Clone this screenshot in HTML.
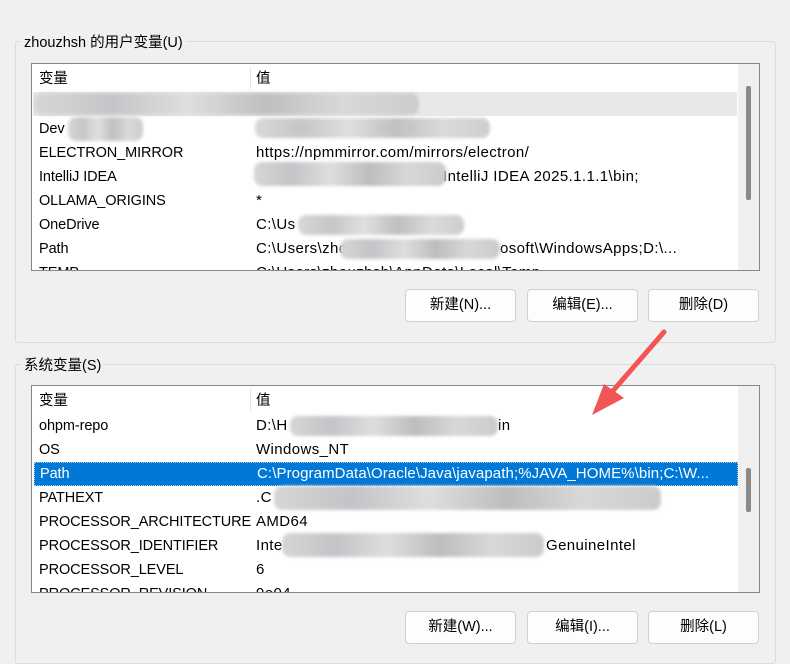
<!DOCTYPE html>
<html><head><meta charset="utf-8"><style>
*{margin:0;padding:0;box-sizing:border-box}
body{width:790px;height:627px;background:#f0f0f0;position:relative;overflow:hidden;font-family:"Segoe UI","Liberation Sans","Noto Sans CJK SC",sans-serif;font-size:14px;color:#000}
.abs{position:absolute}
.grp{position:absolute;border:1px solid #dcdcdc;border-radius:3px}
.gt{position:absolute;background:#f0f0f0;padding:0 3px;font-size:14.5px}
.list{position:absolute;background:#fff;border:1px solid #828790;overflow:hidden}
.row{position:absolute;left:1px;height:24px;width:704px;white-space:nowrap}
.c1{position:absolute;left:6px;top:0;height:24px;line-height:24px;font-size:14.5px;letter-spacing:-.1px}
.c2{position:absolute;left:223px;top:0;height:24px;line-height:24px;font-size:15px;letter-spacing:.4px}
.sb{position:absolute;right:0;top:0;bottom:0;width:21px;background:#f0f0f0}
.th{position:absolute;left:8px;width:5px;background:#8a8a8a;border-radius:2px}
.blur{position:absolute;background:linear-gradient(90deg,#d6d6d6,#c4c4c8 20%,#dedede 40%,#bdbdbd 60%,#d8d8d8 80%,#cbcbcb);filter:blur(1.5px);border-radius:8px;opacity:.95}
.btn{position:absolute;width:111px;height:33px;background:#fdfdfd;border:1px solid #d0d0d0;border-radius:4px;text-align:center;line-height:31px;font-size:14.5px}
.hdr{position:absolute;left:1px;top:3px;height:24px;width:704px}
.div{position:absolute;left:217px;top:0;width:1px;height:22px;background:#e5e5e5}
</style></head><body>

<div class="grp" style="left:15px;top:41px;width:761px;height:302px"></div>
<div class="gt" style="left:21px;top:31px">zhouzhsh 的用户变量(U)</div>
<div class="list" style="left:31px;top:63px;width:729px;height:208px">
 <div class="hdr"><span class="c1">变量</span><div class="div"></div><span class="c2" style="font-size:14.5px;letter-spacing:0">值</span></div>
 <div class="row" style="top:28px;background:#e8e8e8"></div>
 <div class="blur" style="left:2px;top:29px;width:385px;height:22px"></div>
 <div class="row" style="top:53px"><span class="c1">Dev</span></div>
 <div class="blur" style="left:36px;top:53px;width:75px;height:24px"></div>
 <div class="blur" style="left:223px;top:54px;width:235px;height:20px"></div>
 <div class="row" style="top:77px"><span class="c1">ELECTRON_MIRROR</span><span class="c2">https://npmmirror.com/mirrors/electron/</span></div>
 <div class="row" style="top:101px"><span class="c1">IntelliJ IDEA</span><span class="c2" style="left:410px">IntelliJ IDEA 2025.1.1.1\bin;</span></div>
 <div class="blur" style="left:222px;top:98px;width:192px;height:24px;opacity:1"></div>
 <div class="row" style="top:125px"><span class="c1">OLLAMA_ORIGINS</span><span class="c2">*</span></div>
 <div class="row" style="top:149px"><span class="c1">OneDrive</span><span class="c2">C:\Us</span></div>
 <div class="blur" style="left:266px;top:151px;width:166px;height:20px"></div>
 <div class="row" style="top:173px"><span class="c1">Path</span><span class="c2">C:\Users\zho</span><span class="c2" style="left:467px">osoft\WindowsApps;D:\...</span></div>
 <div class="blur" style="left:308px;top:175px;width:160px;height:20px;opacity:1"></div>
 <div class="row" style="top:197px"><span class="c1">TEMP</span><span class="c2">C:\Users\zhouzhsh\AppData\Local\Temp</span></div>
 <div class="sb"><div class="th" style="top:22px;height:114px"></div></div>
</div>
<div class="btn" style="left:405px;top:289px">新建(N)...</div>
<div class="btn" style="left:527px;top:289px">编辑(E)...</div>
<div class="btn" style="left:648px;top:289px">删除(D)</div>

<div class="grp" style="left:15px;top:364px;width:761px;height:300px"></div>
<div class="gt" style="left:21px;top:354px">系统变量(S)</div>
<div class="list" style="left:31px;top:385px;width:729px;height:208px">
 <div class="hdr"><span class="c1">变量</span><div class="div"></div><span class="c2" style="font-size:14.5px;letter-spacing:0">值</span></div>
 <div class="row" style="top:28px"><span class="c1">ohpm-repo</span><span class="c2">D:\H</span><span class="c2" style="left:465px">in</span></div>
 <div class="blur" style="left:258px;top:30px;width:208px;height:20px;opacity:1"></div>
 <div class="row" style="top:52px"><span class="c1">OS</span><span class="c2">Windows_NT</span></div>
 <div class="row" style="top:76px;background:#0078d7;color:#fff;border:1px dotted #99c9ef;left:2px;width:704px"><span class="c1" style="left:5px;top:-1px">Path</span><span class="c2" style="left:222px;top:-1px;letter-spacing:.1px">C:\ProgramData\Oracle\Java\javapath;%JAVA_HOME%\bin;C:\W...</span></div>
 <div class="row" style="top:100px"><span class="c1">PATHEXT</span><span class="c2">.C</span></div>
 <div class="blur" style="left:242px;top:100px;width:387px;height:24px;opacity:1"></div>
 <div class="row" style="top:124px"><span class="c1">PROCESSOR_ARCHITECTURE</span><span class="c2">AMD64</span></div>
 <div class="row" style="top:148px"><span class="c1">PROCESSOR_IDENTIFIER</span><span class="c2">Inte</span><span class="c2" style="left:513px">GenuineIntel</span></div>
 <div class="blur" style="left:250px;top:147px;width:262px;height:24px;opacity:1"></div>
 <div class="row" style="top:172px"><span class="c1">PROCESSOR_LEVEL</span><span class="c2">6</span></div>
 <div class="row" style="top:196px"><span class="c1">PROCESSOR_REVISION</span><span class="c2">9e04</span></div>
 <div class="sb"><div class="th" style="top:82px;height:44px"></div></div>
</div>
<div class="btn" style="left:405px;top:611px">新建(W)...</div>
<div class="btn" style="left:527px;top:611px">编辑(I)...</div>
<div class="btn" style="left:648px;top:611px">删除(L)</div>

<svg class="abs" style="left:0;top:0" width="790" height="627">
 <line x1="664" y1="332" x2="612" y2="392" stroke="#f25555" stroke-width="5" stroke-linecap="round"/>
 <polygon points="592,415 604,384 624,398" fill="#f25555"/>
</svg>
</body></html>
